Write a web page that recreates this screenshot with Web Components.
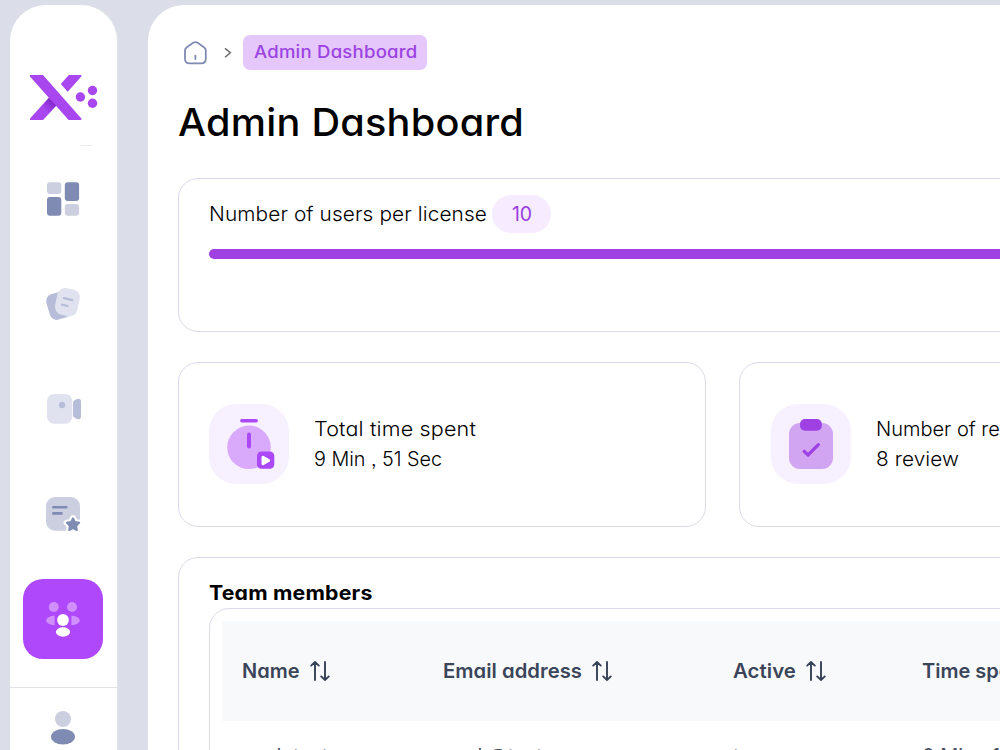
<!DOCTYPE html>
<html lang="en">
<head>
<meta charset="utf-8">
<title>Admin Dashboard</title>
<style>
  body {
    margin: 0;
    height: 750px;
    overflow: hidden;
    background: #dbdee9;
    color: #000;
    font-family: Inter, "Open Sans", sans-serif;
    font-feature-settings: "cv11", "ss03";
  }
</style>
</head>
<body>
<admin-app></admin-app>

<script>
// small helper, every element gets an open shadow root with its own markup
function attach (el, html) {
  el.attachShadow({ mode: 'open' }).innerHTML = html
}

const icons = {
  dashboard: `
    <rect x="24" y="23.2" width="14.3" height="11.8" rx="3" fill="#cbcfdf"/>
    <rect x="41.8" y="23.2" width="14.3" height="18.8" rx="3" fill="#7f8bb3"/>
    <rect x="24" y="38" width="14.3" height="18.8" rx="3" fill="#7f8bb3"/>
    <rect x="41.8" y="45" width="14.3" height="11.8" rx="3" fill="#cbcfdf"/>`,
  papers: `
    <rect x="24.8" y="28.6" width="22" height="26.4" rx="7" fill="#b7bdd8" transform="rotate(-17 35.8 42)"/>
    <rect x="33" y="24.6" width="22.8" height="27.2" rx="8" fill="#e0e3ef" transform="rotate(12 44.4 38.2)"/>
    <path d="M41 34.2l8.3 1.9M39 40.7l5.6 1.3" stroke="#b7bdd8" stroke-width="2.3" stroke-linecap="round"/>`,
  camera: `
    <rect x="24" y="25" width="25.3" height="29.7" rx="7" fill="#e0e3ef"/>
    <circle cx="39" cy="36" r="3.2" fill="#b7bdd8"/>
    <path d="M50 33.5Q50 32 51.5 31.2L54 30Q58 29 58 33V47Q58 51 54 50L51.5 48.8Q50 48 50 46.5Z" fill="#b7bdd8"/>`,
  notes: `
    <rect x="23" y="23" width="34" height="33.7" rx="9" fill="#cbcfdf"/>
    <path d="M30.3 33.3h13M30.3 39.4h8.2" stroke="#7f8bb3" stroke-width="2.6" stroke-linecap="round"/>
    <g stroke-linejoin="round">
      <path d="M50 44.2l2 3.8 4.3.7-3 3.1.6 4.4-3.9-2-3.9 2 .6-4.4-3-3.1 4.3-.7z" fill="#fff" stroke="#fff" stroke-width="6"/>
      <path d="M50 44.2l2 3.8 4.3.7-3 3.1.6 4.4-3.9-2-3.9 2 .6-4.4-3-3.1 4.3-.7z" fill="#7f8bb3" stroke="#7f8bb3" stroke-width="1.8"/>
    </g>`,
  team: `
    <g fill="#d08ffd"><circle cx="30.8" cy="28" r="5"/><circle cx="49" cy="28" r="5"/>
    <ellipse cx="31.5" cy="41.5" rx="8.3" ry="4.7"/><ellipse cx="48.5" cy="41.5" rx="8.3" ry="4.7"/></g>
    <rect x="31.6" y="34" width="16.8" height="14" fill="#af48fb"/>
    <circle cx="40" cy="41" r="5.9" fill="#fff"/>
    <ellipse cx="40" cy="53" rx="7.1" ry="4.7" fill="#fff"/>`,
  user: `
    <circle cx="40" cy="31" r="8" fill="#cbcfdf"/>
    <ellipse cx="40" cy="48.8" rx="12" ry="7.8" fill="#7f8bb3"/>`,
  timer: `
    <circle cx="40" cy="43.3" r="21.8" fill="#d9aafc"/>
    <path d="M32.8 16.8h14.4" stroke="#ab48f8" stroke-width="3.4" stroke-linecap="round"/>
    <path d="M40 30.4v12" stroke="#ab48f8" stroke-width="4" stroke-linecap="round"/>
    <rect x="48" y="47.5" width="17.3" height="17.3" rx="4.5" fill="#ab48f8"/>
    <path d="M54 53.3v6.4l5.6-3.2z" fill="#fff" stroke="#fff" stroke-width="3" stroke-linejoin="round"/>`,
  clipboard: `
    <rect x="18" y="19" width="44" height="46" rx="11" fill="#d2a5f2"/>
    <rect x="29" y="15" width="21.8" height="11.8" rx="5" fill="#9e40e2"/>
    <path d="M33.2 47.3l3.9 3.7L47.4 40.7" fill="none" stroke="#9e40e2" stroke-width="3.2" stroke-linecap="round"/>`
}

class IconTile extends HTMLElement {
  constructor () {
    super()
    attach(this, `
      <style>
        :host { display: block; width: 80px; height: 80px; flex: none; border-radius: 20px; }
        :host([active]) { background: #af48fb; }
        :host([soft]) { background: #f6f0ff; border-radius: 27px; }
        svg { display: block; }
      </style>
      <svg width="80" height="80" viewBox="0 0 80 80">${icons[this.getAttribute('name')] || ''}</svg>`)
  }
}

// sets one line of text to a given width: mostly wider letters, the rest as letter spacing
class FitText extends HTMLElement {
  constructor () {
    super()
    attach(this, `
      <style>
        :host { display: inline-block; white-space: nowrap; }
        span { display: inline-block; transform-origin: 0 50%; }
      </style>
      <span><slot></slot></span>`)
  }

  connectedCallback () {
    const span = this.shadowRoot.querySelector('span')
    const width = Number(this.getAttribute('width'))
    const natural = span.getBoundingClientRect().width
    const scale = 1 + (width / natural - 1) * 0.8
    const gap = (width / scale - natural) / this.textContent.length
    span.style.letterSpacing = `${gap}px`
    // nearly exact texts stay unscaled
    if (Math.abs(scale - 1) > 0.01) span.style.transform = `scaleX(${scale})`
    this.style.width = `${width}px`
  }
}

class SideBar extends HTMLElement {
  constructor () {
    super()
    attach(this, `
      <style>
        :host {
          display: flex; flex-direction: column; align-items: center;
          box-sizing: border-box; width: 107px; height: 800px; padding-top: 70px;
          background: #fff; border-radius: 36px; box-shadow: 1px 0 0 #e4e5ea; flex: none;
        }
        .logo { display: block; margin-right: -1px; }
        .mark { width: 12px; height: 1px; margin: 25px 0 13px 44px; background: #ebebf0; }
        nav { display: flex; flex-direction: column; gap: 25px; margin-right: 1px; }
        .user { display: flex; justify-content: center; width: 100%; margin-top: 28px; border-top: 1px solid #e2e2e8; }
        .user icon-tile { margin-right: 1px; }
      </style>
      <svg class="logo" width="68" height="45" viewBox="0 0 68 45">
        <defs>
          <linearGradient id="fold" gradientUnits="userSpaceOnUse" x1="25" y1="25" x2="11" y2="38">
            <stop offset="0" stop-color="#7a1fc4"/><stop offset="0.75" stop-color="#a846f0"/>
          </linearGradient>
        </defs>
        <path d="M19 22.4L27 30 13 45H0v-1.4z" fill="url(#fold)"/>
        <path d="M0 0h13L51.3 43.6V45H38.6L0 1.4z" fill="#a846f0"/>
        <path d="M38.8 0h12.5v1.4L37.7 16.8 30.8 9z" fill="#a846f0"/>
        <g fill="#a846f0"><circle cx="50.4" cy="22" r="4.7"/><circle cx="62.5" cy="15.5" r="4.7"/><circle cx="62.5" cy="28.3" r="4.7"/></g>
      </svg>
      <div class="mark"></div>
      <nav>
        <icon-tile name="dashboard"></icon-tile>
        <icon-tile name="papers"></icon-tile>
        <icon-tile name="camera"></icon-tile>
        <icon-tile name="notes"></icon-tile>
        <icon-tile name="team" active></icon-tile>
      </nav>
      <div class="user"><icon-tile name="user"></icon-tile></div>`)
  }
}

class BreadCrumb extends HTMLElement {
  constructor () {
    super()
    attach(this, `
      <style>
        :host { display: flex; align-items: center; height: 35px; padding-left: 5px; }
        .home { margin-bottom: 1px; }
        .sep { margin: 0 11px 0 16px; }
        .page {
          box-sizing: border-box; height: 35px; width: 184px; padding-left: 11px; border-radius: 7px;
          background: #e5c7fc; color: #9b42e2; font-size: 17px; font-weight: 500; line-height: 34px;
        }
      </style>
      <svg class="home" width="25" height="25" viewBox="0 0 25 25" fill="none" stroke="#7f8bb3" stroke-width="1.8" stroke-linecap="round">
        <path d="M2 10.6Q2 8.4 3.8 7.2L10.2 2.7Q12.4 1.4 14.6 2.7L21 7.2Q22.8 8.4 22.8 10.6V18.8Q22.8 23.4 18.2 23.4H6.6Q2 23.4 2 18.8Z"/>
        <path d="M12.4 15.6v3.4"/>
      </svg>
      <svg class="sep" width="8" height="12" viewBox="0 0 8 12" fill="none" stroke="#666" stroke-width="1.4">
        <path d="M1 1.4l5.4 4.4L1 10.2"/>
      </svg>
      <div class="page"><fit-text width="163.5">Admin Dashboard</fit-text></div>`)
  }
}

class OutlineCard extends HTMLElement {
  constructor () {
    super()
    attach(this, `
      <style>
        :host {
          display: block; box-sizing: border-box; padding: 0 30px;
          border: 1px solid #dbdbe9; border-radius: 20px; background: #fff;
        }
      </style>
      <slot></slot>`)
  }
}

class LicenseUsage extends HTMLElement {
  constructor () {
    super()
    attach(this, `
      <style>
        :host { display: block; }
        outline-card { height: 154px; padding-top: 16px; }
        .row { display: flex; align-items: center; gap: 5px; height: 38px; font-size: 20px; font-weight: 300; }
        .count {
          width: 59px; height: 38px; border-radius: 19px; background: #f6ebff;
          color: #9b3fe0; font-weight: 400; line-height: 38px; text-align: center;
        }
        .bar { height: 10px; margin-top: 16px; border-radius: 5px; background: #9e40e2; }
      </style>
      <outline-card>
        <div class="row">
          <fit-text width="278">Number of users per license</fit-text>
          <div class="count"><fit-text width="20">10</fit-text></div>
        </div>
        <div class="bar"></div>
      </outline-card>`)
  }
}

class StatCard extends HTMLElement {
  constructor () {
    super()
    attach(this, `
      <style>
        :host { display: block; }
        outline-card { display: flex; align-items: center; gap: 25px; height: 165px; padding-bottom: 1px; }
        :host([icon=clipboard]) outline-card { padding-left: 31px; }
        .text { display: flex; flex-direction: column; font-size: 20px; font-weight: 300; line-height: 30px; }
      </style>
      <outline-card>
        <icon-tile name="${this.getAttribute('icon')}" soft></icon-tile>
        <div class="text"><slot name="label"></slot><slot name="value"></slot></div>
      </outline-card>`)
  }
}

class SortHeader extends HTMLElement {
  constructor () {
    super()
    attach(this, `
      <style>
        :host {
          display: flex; align-items: center; gap: 10px; padding-left: 20px; white-space: nowrap;
          color: #3b4559; font-size: 20px; font-weight: 600;
        }
      </style>
      <slot></slot>
      <svg width="20" height="20" viewBox="0 0 20 20" fill="none" stroke="#374157" stroke-width="1.9" stroke-linecap="round" stroke-linejoin="round">
        <path d="M5 19V1M1.2 4.6L5 1l3.8 3.6M15 1v18M11.2 15.4l3.8 3.6 3.8-3.6"/>
      </svg>`)
  }
}

class MembersTable extends HTMLElement {
  constructor () {
    super()
    attach(this, `
      <style>
        :host { display: block; }
        outline-card { height: 400px; }
        h2 { margin: 20px 0 0; height: 30px; font-size: 20px; font-weight: 700; line-height: 30px; }
        outline-card.inner { height: 330px; padding: 12px; }
        .grid { display: grid; grid-template-columns: 201px 290px 189px 1fr; }
        .head { height: 100px; background: #f8f9fb; }
        .body { height: 70px; align-items: center; color: #495163; font-size: 20px; white-space: nowrap; }
        .body div { padding-left: 20px; }
      </style>
      <outline-card>
        <h2><fit-text width="163.5">Team members</fit-text></h2>
        <outline-card class="inner">
          <div class="grid head">
            <sort-header><fit-text width="58">Name</fit-text></sort-header>
            <sort-header><fit-text width="139">Email address</fit-text></sort-header>
            <sort-header><fit-text width="63">Active</fit-text></sort-header>
            <sort-header>Time spent</sort-header>
          </div>
          <div class="grid body">
            <div>esak test</div>
            <div>esak@test.com</div>
            <div>true</div>
            <div>0 Min , 16 Sec</div>
          </div>
        </outline-card>
      </outline-card>`)
  }
}

class AdminApp extends HTMLElement {
  constructor () {
    super()
    attach(this, `
      <style>
        :host { display: flex; align-items: flex-start; gap: 31px; padding: 5px 0 0 10px; height: 745px; overflow: hidden; }
        main {
          box-sizing: border-box; width: 1149px; height: 1000px; flex: none;
          padding: 30px; background: #fff; border-radius: 36px;
        }
        h1 { margin: 26px 0 29px; height: 53px; font-size: 38px; font-weight: 500; line-height: 53px; }
        .stats { display: grid; grid-template-columns: 528px 528px; gap: 33px; margin: 30px 0; }
      </style>
      <side-bar></side-bar>
      <main>
        <bread-crumb></bread-crumb>
        <h1><fit-text width="346">Admin Dashboard</fit-text></h1>
        <license-usage></license-usage>
        <div class="stats">
          <stat-card icon="timer">
            <fit-text slot="label" width="162">Total time spent</fit-text>
            <fit-text slot="value" width="128">9 Min , 51 Sec</fit-text>
          </stat-card>
          <stat-card icon="clipboard">
            <fit-text slot="label" width="178">Number of reviews</fit-text>
            <fit-text slot="value" width="83">8 review</fit-text>
          </stat-card>
        </div>
        <members-table></members-table>
      </main>`)
  }
}

customElements.define('icon-tile', IconTile)
customElements.define('fit-text', FitText)
customElements.define('side-bar', SideBar)
customElements.define('bread-crumb', BreadCrumb)
customElements.define('outline-card', OutlineCard)
customElements.define('license-usage', LicenseUsage)
customElements.define('stat-card', StatCard)
customElements.define('sort-header', SortHeader)
customElements.define('members-table', MembersTable)
customElements.define('admin-app', AdminApp)
</script>
</body>
</html>
